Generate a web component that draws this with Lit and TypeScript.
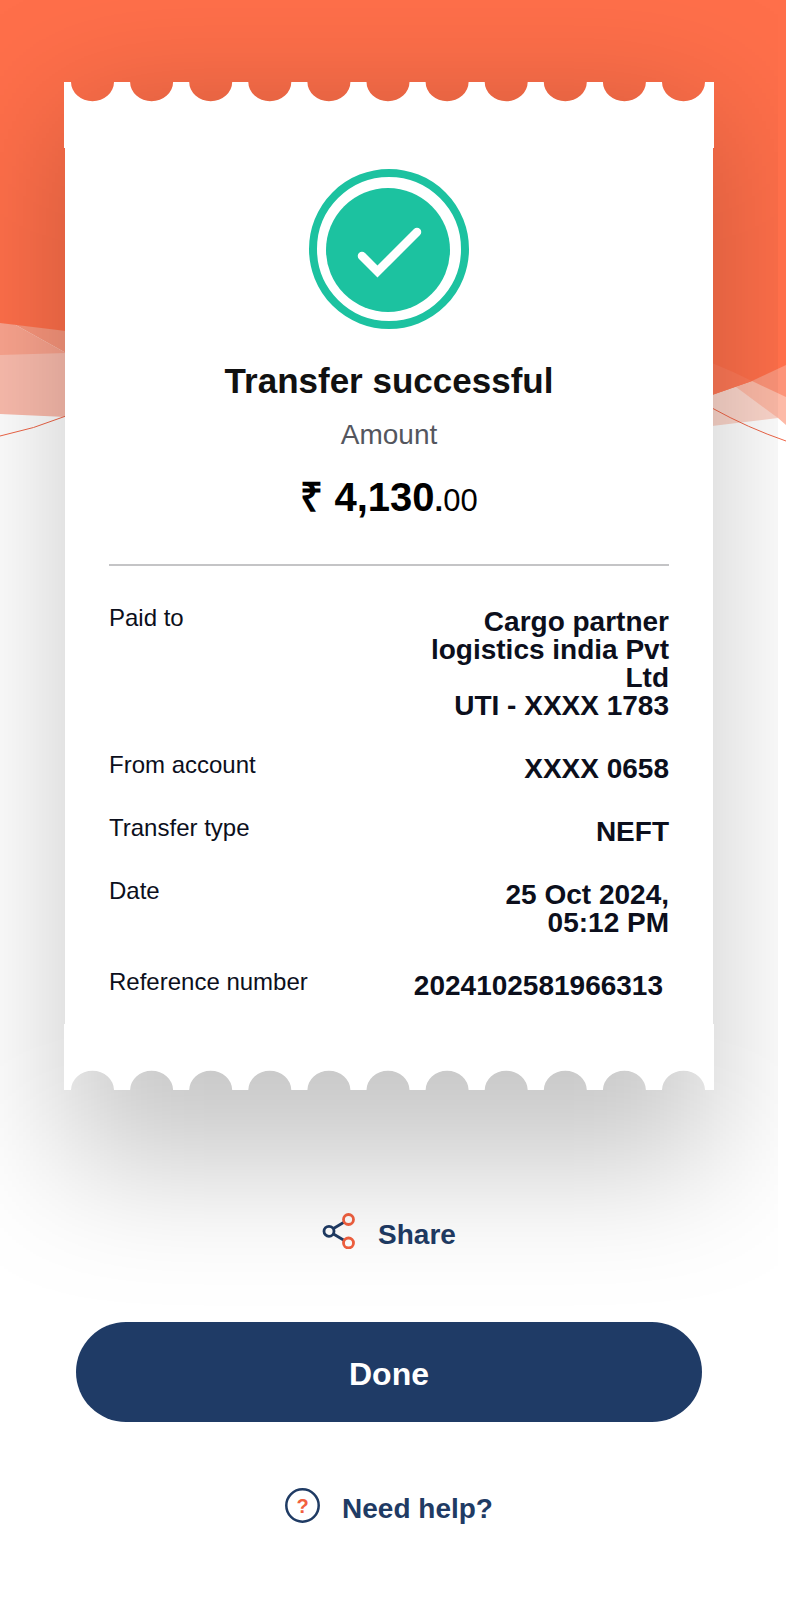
import { LitElement, html, svg, css } from "lit";
import { customElement, property } from "lit/decorators.js";

interface Detail {
  label: string;
  lines: string[];
  inset?: boolean;
}

const DETAILS: Detail[] = [
  { label: "Paid to", lines: ["Cargo partner", "logistics india Pvt", "Ltd", "UTI - XXXX 1783"] },
  { label: "From account", lines: ["XXXX 0658"] },
  { label: "Transfer type", lines: ["NEFT"] },
  { label: "Date", lines: ["25 Oct 2024,", "05:12 PM"] },
  { label: "Reference number", lines: ["2024102581966313"], inset: true },
];

/** Outline of a receipt edge with eleven scalloped notches along its top. */
function scallopPath(): string {
  let d = "M0 66V0H7";
  for (let i = 0; i < 11; i++) {
    const left = 7 + i * 59.1;
    d += `H${left}A21.5 19.2 0 0 0 ${left + 43} 0`;
  }
  return d + "H650V66Z";
}

@customElement("receipt-edge")
export class ReceiptEdge extends LitElement {
  @property({ type: Boolean, reflect: true }) flipped = false;

  static styles = css`
    :host {
      display: block;
      height: 66px;
      margin: 0 -1px;
    }
    .edge {
      display: block;
      width: 100%;
      height: 100%;
    }
    :host([flipped]) .edge {
      transform: scaleY(-1);
    }
  `;

  render() {
    return html`
      <svg class="edge" viewBox="0 0 650 66" preserveAspectRatio="none" aria-hidden="true">
        <path d=${scallopPath()} fill="#fff" />
      </svg>
    `;
  }
}

@customElement("wave-backdrop")
export class WaveBackdrop extends LitElement {
  static styles = css`
    :host {
      display: block;
    }
    .waves {
      display: block;
      width: 100%;
      height: 460px;
    }
  `;

  render() {
    return html`
      <svg class="waves" viewBox="0 0 786 460" preserveAspectRatio="none" aria-hidden="true">
        <path d="M0 354L66 352V417L0 414Z" fill="#fbbcad" />
        <path d="M0 322L14 324L66 353L0 355Z" fill="#fba48e" />
        <path d="M14 324L66 330V353Z" fill="#fa967c" />
        <path d="M712 390L740 380L778 418L712 426Z" fill="#fcd6cb" />
        <path d="M736 387L750 378L786 390V425L778 418Z" fill="#fdbaa7" />
        <path d="M748 380L786 363V397L752 381Z" fill="#fd9479" />
        <path d="M0 0H786V365L752 381L712 395L66 331L0 323Z" fill="#ff6f4a" />
        <path d="M712 363Q732 371 752 381L712 395Z" fill="#ff7856" />
        <path d="M0 436Q34 429 66 416" fill="none" stroke="#ef6547" />
        <path d="M712 408Q748 428 786 441" fill="none" stroke="#ef6547" />
      </svg>
    `;
  }
}

@customElement("app-root")
export class AppRoot extends LitElement {
  static styles = css`
    :host {
      display: block;
      position: relative;
      min-height: 100vh;
      background: #fff;
      font-family: "Liberation Sans", Arial, sans-serif;
      color: #0c0f1c;
    }
    .backdrop {
      position: absolute;
      inset: 0 0 auto 0;
    }
    .screen {
      position: relative;
      box-sizing: border-box;
      min-height: 100vh;
      margin-right: 8px;
      padding: 82px 65px 77px;
      overflow: hidden;
      display: flex;
      flex-direction: column;
    }
    .receipt {
      position: relative;
    }
    .shade {
      position: absolute;
      inset: 32px 0 -76px 0;
      background: rgba(0, 0, 0, 0.22);
      filter: blur(66px);
    }
    .paper {
      position: relative;
    }
    .body {
      display: flex;
      flex-direction: column;
      padding: 21px 44px 24px;
      background: #fff;
    }
    .tick {
      width: 160px;
      height: 160px;
      align-self: center;
    }
    h1,
    p,
    dl,
    dd {
      margin: 0;
    }
    h1 {
      margin-top: 31px;
      font-size: 35px;
      line-height: 42px;
      text-align: center;
      color: #111;
    }
    .caption {
      margin-top: 17px;
      font-size: 28px;
      line-height: 32px;
      text-align: center;
      color: #54565e;
    }
    .amount {
      margin-top: 22px;
      font-size: 40px;
      line-height: 48px;
      font-weight: 700;
      text-align: center;
      color: #000;
    }
    .point,
    .paise {
      font-size: 31px;
      line-height: 32px;
    }
    .paise {
      font-weight: 400;
    }
    hr {
      width: 100%;
      height: 2px;
      margin: 43px 0 38px;
      border: 0;
      background: #c4c4c6;
    }
    .details {
      display: flex;
      flex-direction: column;
      gap: 31px;
    }
    .row {
      display: flex;
      justify-content: space-between;
      align-items: flex-start;
      line-height: 28px;
    }
    dt {
      font-size: 24px;
    }
    dd {
      display: flex;
      flex-direction: column;
      padding-top: 4px;
      font-size: 28px;
      font-weight: 700;
      text-align: right;
    }
    .inset {
      padding-right: 6px;
    }
    .link,
    .done {
      border: 0;
      font-family: inherit;
      font-weight: 700;
      cursor: pointer;
    }
    .link {
      display: flex;
      align-self: center;
      align-items: flex-end;
      gap: 22px;
      padding: 0;
      background: none;
      color: #1f3b64;
      font-size: 28px;
      line-height: 28px;
      text-decoration: none;
    }
    .share {
      margin-top: 123px;
    }
    .done {
      height: 100px;
      margin: 73px 11px 66px;
      padding: 4px 0 0;
      border-radius: 50px;
      background: #1f3b66;
      color: #fff;
      font-size: 32px;
    }
    .glyph {
      display: block;
      flex: none;
    }
    .mark {
      font-size: 20px;
      font-weight: 700;
    }
  `;

  private row(d: Detail) {
    return html`
      <div class="row">
        <dt>${d.label}</dt>
        <dd class=${d.inset ? "inset" : ""}>${d.lines.map((line) => html`<span>${line}</span>`)}</dd>
      </div>
    `;
  }

  private node(x: number, y: number, color: string) {
    return svg`<circle cx=${x} cy=${y} r="5" stroke=${color} />`;
  }

  render() {
    return html`
      <wave-backdrop class="backdrop"></wave-backdrop>
      <main class="screen">
        <section class="receipt">
          <div class="shade"></div>
          <div class="paper">
            <receipt-edge></receipt-edge>
            <div class="body">
              <svg class="tick" viewBox="0 0 160 160" fill="none" aria-hidden="true">
                <circle cx="80" cy="80" r="76" stroke="#1cc2a0" stroke-width="8" />
                <circle cx="79" cy="81" r="62" fill="#1cc2a0" />
                <path d="M53 87L68.500 102.500L108 63" stroke="#fff" stroke-width="8.500" stroke-linecap="round" />
              </svg>
              <h1>Transfer successful</h1>
              <p class="caption">Amount</p>
              <p class="amount">₹ 4,130<span class="point">.</span><span class="paise">00</span></p>
              <hr />
              <dl class="details">${DETAILS.map((d) => this.row(d))}</dl>
            </div>
            <receipt-edge flipped></receipt-edge>
          </div>
        </section>
        <button class="link share" type="button">
          <svg class="glyph" width="34" height="36" viewBox="0 0 34 36" fill="none" stroke-width="2.800" aria-hidden="true">
            <path d="M11.500 15.500L21.500 9.500M11.500 21L21.500 27" stroke="#1f3b64" />
            ${this.node(7, 18.3, "#1f3b64")} ${this.node(26.5, 6.5, "#f2603f")}
            ${this.node(26.5, 30, "#f2603f")}
          </svg>
          Share
        </button>
        <button class="done" type="button">Done</button>
        <a class="link" href="#help">
          <svg class="glyph" width="35" height="35" viewBox="0 0 35 35" aria-hidden="true">
            <circle cx="17.500" cy="17.500" r="16.200" fill="none" stroke="#1f3b64" stroke-width="2.500" />
            <text class="mark" x="17.500" y="25" text-anchor="middle" fill="#f2603f">?</text>
          </svg>
          Need help?
        </a>
      </main>
    `;
  }
}
